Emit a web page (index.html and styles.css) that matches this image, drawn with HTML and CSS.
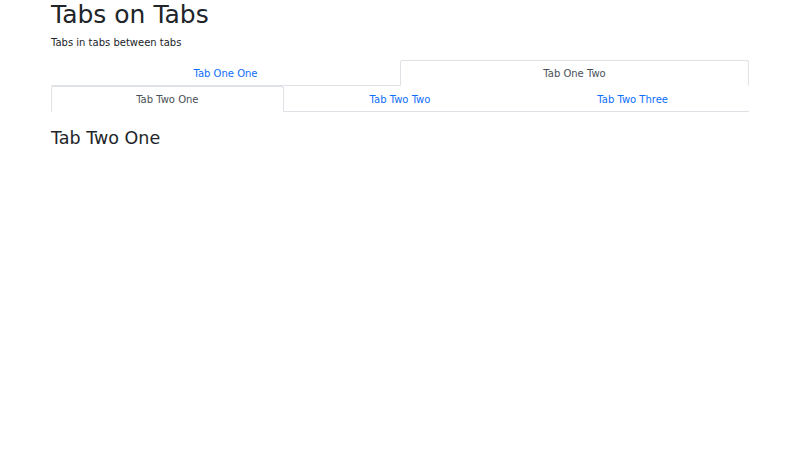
FILE: index.html
```html
<!DOCTYPE html>
<html>
<head>
<meta charset="utf-8">
<link rel="stylesheet" href="styles.css">
</head>
<body>
<div class="container">
  <h1 class="title">Tabs on Tabs</h1>
  <p class="lead">Tabs in tabs between tabs</p>
  <ul class="tabs">
    <li class="tab"><a class="tab-link" href="#">Tab One One</a></li>
    <li class="tab"><a class="tab-link active" href="#">Tab One Two</a></li>
  </ul>
  <ul class="tabs">
    <li class="tab"><a class="tab-link active" href="#">Tab Two One</a></li>
    <li class="tab"><a class="tab-link" href="#">Tab Two Two</a></li>
    <li class="tab"><a class="tab-link" href="#">Tab Two Three</a></li>
  </ul>
  <div class="pane">
    <h3 class="pane-title">Tab Two One</h3>
  </div>
</div>
</body>
</html>
```
FILE: styles.css
```css
* { box-sizing: border-box; }
body {
  margin: 0;
  font-family: "DejaVu Sans", sans-serif;
  font-size: 10px;
  line-height: 1.5;
  color: #212529;
  background: #fff;
}
.container {
  width: 698px;
  margin-left: 51px;
}
.title {
  margin: 0 0 5px;
  font-size: 25px;
  font-weight: normal;
  line-height: 1.2;
}
.lead {
  margin: 0 0 10px;
}
.tabs {
  display: flex;
  list-style: none;
  margin: 0;
  padding: 0;
  border-bottom: 1px solid #dee2e6;
}
.tab {
  flex: 1 1 0;
  text-align: center;
}
.tab-link {
  display: block;
  padding: 4.5px 10px;
  margin-bottom: -1px;
  border: 1px solid transparent;
  border-top-left-radius: 2.5px;
  border-top-right-radius: 2.5px;
  color: #0d6efd;
  text-decoration: none;
}
.tab-link.active {
  color: #495057;
  background: #fff;
  border-color: #dee2e6 #dee2e6 #fff;
}
.pane {
  padding-top: 16px;
}
.pane-title {
  margin: 0;
  font-size: 17.5px;
  font-weight: normal;
  line-height: 1.2;
}
```
